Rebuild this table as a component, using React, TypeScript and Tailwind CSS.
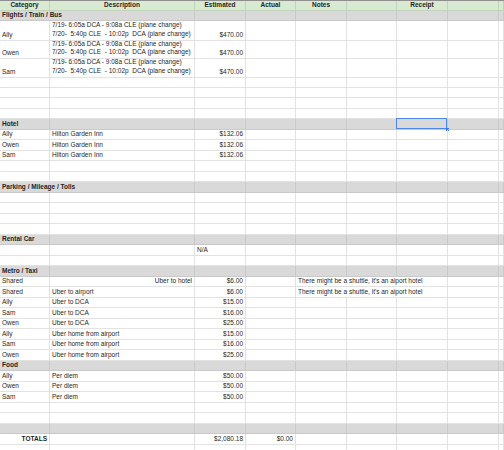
import type { ReactNode } from "react";

type Cell = {
  t?: ReactNode;
  align?: "left" | "right" | "center";
  bold?: boolean;
  span?: 1 | 2 | 3;
  sel?: boolean;
};

const GRID = "grid grid-cols-[50px_145px_51px_50px_51px_50px_51px_51px_5px]";

const SPAN = { 1: "", 2: "col-span-2", 3: "col-span-3" };
const ALIGN = {
  left: "justify-start text-left",
  right: "justify-end text-right",
  center: "justify-center text-center",
};

const TONE = {
  white: "bg-white border-[#e2e2e2]",
  gray: "bg-[#d9d9d9] border-[#c9c9c9]",
  green: "bg-[#d9ead3] border-[#c2d3bc]",
};

function Row({
  cells = [],
  tone = "white",
  h = "h-[10.5px]",
  top = false,
}: {
  cells?: Cell[];
  tone?: keyof typeof TONE;
  h?: string;
  top?: boolean;
}) {
  const filled: Cell[] = [];
  let used = 0;
  for (const c of cells) {
    filled.push(c);
    used += c.span ?? 1;
  }
  while (used < 9) {
    filled.push({});
    used++;
  }
  const [bg, line] = TONE[tone].split(" ");

  return (
    <div className={`${GRID} ${h} ${bg} ${top ? "border-t border-[#8f8f8f]" : ""}`}>
      {filled.map((c, i) => (
        <div
          key={i}
          className={`relative flex items-end whitespace-pre px-[2px] pb-[1.5px] border-r border-b ${line} ${SPAN[c.span ?? 1]} ${ALIGN[c.align ?? "left"]} ${c.bold ? "font-bold" : ""}`}
        >
          {c.t}
          {c.sel && (
            <>
              <div className="absolute -left-px -top-px -right-0 -bottom-0 border border-[#4f86ec]" />
              <div className="absolute -right-[2px] -bottom-[2px] h-[3px] w-[3px] bg-[#3b78e7]" />
            </>
          )}
        </div>
      ))}
    </div>
  );
}

const FLIGHT = (
  <div className="flex flex-col leading-[8.5px]">
    <span>7/19- 6:05a DCA - 9:08a CLE (plane change)</span>
    <span>7/20-  5:40p CLE  - 10:02p  DCA (plane change)</span>
  </div>
);

const NOTE = "There might be a shuttle, it's an aiport hotel";

function Section({ title }: { title: string }) {
  return <Row tone="gray" cells={[{ t: title, bold: true, span: title.length > 12 ? 2 : 1 }]} />;
}

function Item({ who, desc, est }: { who: string; desc: string; est: string }) {
  return <Row cells={[{ t: who }, { t: desc }, { t: est, align: "right" }]} />;
}

export default function App() {
  return (
    <div className="h-[450px] w-[504px] overflow-hidden bg-white font-['Liberation_Sans',Arial,sans-serif] text-[6.5px] leading-[7.5px] text-[#1f1f1f]">
      {/* Header */}
      <Row
        tone="green"
        top
        cells={[
          { t: "Category", bold: true, align: "center" },
          { t: "Description", bold: true, align: "center" },
          { t: "Estimated", bold: true, align: "center" },
          { t: "Actual", bold: true, align: "center" },
          { t: "Notes", bold: true, align: "center" },
          {},
          { t: "Receipt", bold: true, align: "center" },
        ]}
      />

      <Section title="Flights / Train / Bus" />
      {["Ally", "Owen", "Sam"].map((who, i) => (
        <Row
          key={who}
          h={i === 2 ? "h-[19px]" : "h-[18.5px]"}
          cells={[{ t: who }, { t: FLIGHT }, { t: "$470.00", align: "right" }]}
        />
      ))}
      <Row />
      <Row />
      <Row />
      <Row />

      <Row tone="gray" cells={[{ t: "Hotel", bold: true }, {}, {}, {}, {}, {}, { sel: true }]} />
      <Item who="Ally" desc="Hilton Garden Inn" est="$132.06" />
      <Item who="Owen" desc="Hilton Garden Inn" est="$132.06" />
      <Item who="Sam" desc="Hilton Garden Inn" est="$132.06" />
      <Row />
      <Row />

      <Section title="Parking / Mileage / Tolls" />
      <Row />
      <Row />
      <Row />
      <Row />

      <Section title="Rental Car" />
      <Row cells={[{}, {}, { t: "N/A" }]} />
      <Row />

      <Section title="Metro / Taxi" />
      <Row
        cells={[
          { t: "Shared" },
          { t: "Uber to hotel", align: "right" },
          { t: "$6.00", align: "right" },
          {},
          { t: NOTE, span: 3 },
        ]}
      />
      <Row
        cells={[
          { t: "Shared" },
          { t: "Uber to airport" },
          { t: "$6.00", align: "right" },
          {},
          { t: NOTE, span: 3 },
        ]}
      />
      <Item who="Ally" desc="Uber to DCA" est="$15.00" />
      <Item who="Sam" desc="Uber to DCA" est="$16.00" />
      <Item who="Owen" desc="Uber to DCA" est="$25.00" />
      <Item who="Ally" desc="Uber home from airport" est="$15.00" />
      <Item who="Sam" desc="Uber home from airport" est="$16.00" />
      <Item who="Owen" desc="Uber home from airport" est="$25.00" />

      <Section title="Food" />
      <Item who="Ally" desc="Per diem" est="$50.00" />
      <Item who="Owen" desc="Per diem" est="$50.00" />
      <Item who="Sam" desc="Per diem" est="$50.00" />
      <Row />
      <Row />

      <Row tone="gray" />
      <Row
        cells={[
          { t: "TOTALS", bold: true, align: "right" },
          {},
          { t: "$2,080.18", align: "right" },
          { t: "$0.00", align: "right" },
        ]}
      />
      <Row />
    </div>
  );
}
